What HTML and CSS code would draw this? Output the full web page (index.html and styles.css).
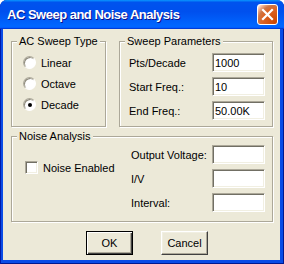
FILE: index.html
```html
<!DOCTYPE html>
<html lang="en">
<head>
  <meta charset="UTF-8">
  <title>AC Sweep and Noise Analysis</title>
  <link rel="stylesheet" href="styles.css">
</head>
<body>

  <div class="window">
    <div class="titlebar">
      <span class="title">AC Sweep and Noise Analysis</span>
      <button class="close" aria-label="Close">
        <svg width="19" height="19" viewBox="0 0 19 19">
          <path d="M5 5 L14 14 M14 5 L5 14" stroke="#fff" stroke-width="2.2" stroke-linecap="square"/>
        </svg>
      </button>
    </div>

    <div class="client">
      <div class="top-row">
        <fieldset class="group sweep-type">
          <legend>AC Sweep Type</legend>
          <div class="options">
            <label class="option"><span class="radio"></span>Linear</label>
            <label class="option"><span class="radio"></span>Octave</label>
            <label class="option"><span class="radio checked"></span>Decade</label>
          </div>
        </fieldset>

        <fieldset class="group sweep-params">
          <legend>Sweep Parameters</legend>
          <div class="fields params">
            <label>Pts/Decade</label><input class="field" value="1000">
            <label>Start Freq.:</label><input class="field" value="10">
            <label>End Freq.:</label><input class="field" value="50.00K">
          </div>
        </fieldset>
      </div>

      <fieldset class="group noise">
        <legend>Noise Analysis</legend>
        <div class="noise-body">
          <label class="check"><span class="box"></span>Noise Enabled</label>
          <div class="fields">
            <label>Output Voltage:</label><input class="field" value="">
            <label>I/V</label><input class="field" value="">
            <label>Interval:</label><input class="field" value="">
          </div>
        </div>
      </fieldset>

      <div class="buttons">
        <button class="btn default">OK</button>
        <button class="btn">Cancel</button>
      </div>
    </div>
  </div>

</body>
</html>
```

FILE: styles.css
```css
body {
  margin: 0;
  background: #fff;
  font-family: "Liberation Sans", Arial, sans-serif;
  font-size: 11px;
  color: #000;
}

.window {
  width: 284px;
  height: 264px;
  display: flex;
  flex-direction: column;
  background: #0a4be6;
  border-radius: 7px 7px 0 0;
  box-shadow: inset 1px 0 #0019a8, inset -1px -1px #001890;
  overflow: hidden;
}

.titlebar {
  height: 29px;
  flex: none;
  display: flex;
  align-items: center;
  justify-content: space-between;
  padding: 0 6px 0 7px;
  background: linear-gradient(180deg, #0997ff, #0053ee 8%, #0050ee 40%, #06f 88%, #06f 93%, #005bff 95%, #003dd7 96%, #003dd7);
}
.title {
  color: #fff;
  font-weight: bold;
  font-size: 13px;
  letter-spacing: -0.5px;
  text-shadow: 1px 1px #0f1089;
}
.close {
  width: 21px;
  height: 21px;
  padding: 0;
  border: 1px solid #fff;
  border-radius: 3px;
  display: flex;
  align-items: center;
  justify-content: center;
  background: radial-gradient(circle at 90% 90%, #cc4600 0%, #dc6527 55%, #cd7546 70%, #ffccb2 90%, #fff 100%);
}

.client {
  flex: 1;
  margin: 0 4px 4px 3px;
  padding: 6px 7px 0 8px;
  background: #ece9d8;
  display: flex;
  flex-direction: column;
}

.top-row {
  display: flex;
  gap: 13px;
}

.group {
  margin: 0;
  padding: 0;
  min-width: 0;
  border: 1px solid #aca899;
  box-shadow: inset 1px 1px #fff, 1px 1px #fff;
}
.group legend {
  margin-left: 5px;
  padding: 0 2px;
  line-height: 13px;
  background: #ece9d8;
}
.sweep-type {
  width: 93px;
  flex: none;
}
.sweep-params {
  flex: 1;
}

.options {
  padding: 4px 0 0 11px;
}
.option {
  height: 21px;
  display: flex;
  align-items: center;
}
.radio {
  width: 11px;
  height: 11px;
  margin-right: 5px;
  border: 1px solid;
  border-color: #aca899 #fff #fff #aca899;
  border-radius: 50%;
  background: #fff;
  box-shadow: inset 1px 1px #8e8b7c;
  display: flex;
  align-items: center;
  justify-content: center;
}
.radio.checked::after {
  content: "";
  width: 4px;
  height: 4px;
  border-radius: 50%;
  background: #000;
}

.fields {
  display: grid;
  grid-template-columns: 1fr 53px;
  grid-auto-rows: 19px;
  row-gap: 5px;
  align-items: center;
}
.params {
  padding: 5px 7px 6px 9px;
}
.field {
  box-sizing: border-box;
  width: 53px;
  height: 19px;
  margin: 0;
  padding: 0 2px;
  font: inherit;
  border: 1px solid;
  border-color: #aca899 #fff #fff #aca899;
  box-shadow: inset 1px 1px #716f64, inset -1px -1px #f1efe2;
  background: #fff;
  outline: none;
}

.noise {
  margin-top: 3px;
}
.noise-body {
  display: flex;
  padding: 2px 7px 9px 13px;
}
.check {
  width: 106px;
  flex: none;
  height: 13px;
  margin-top: 16px;
  display: flex;
  align-items: center;
}
.box {
  box-sizing: border-box;
  width: 13px;
  height: 13px;
  margin-right: 5px;
  border: 1px solid;
  border-color: #aca899 #fff #fff #aca899;
  box-shadow: inset 1px 1px #716f64, inset -1px -1px #f1efe2;
  background: #fff;
}
.noise .fields {
  flex: 1;
}

.buttons {
  display: flex;
  gap: 28px;
  margin-top: 9px;
  padding-left: 75px;
}
.btn {
  width: 47px;
  height: 24px;
  padding: 0;
  font: inherit;
  font-size: 11px;
  color: #000;
  background: #ece9d8;
  border: 1px solid;
  border-color: #fff #404040 #404040 #fff;
  box-shadow: inset -1px -1px #aca899, inset 1px 1px #f1efe2;
}
.btn.default {
  border-color: #000;
  box-shadow: inset 1px 1px #fff, inset -1px -1px #404040, inset -2px -2px #aca899;
}
```
